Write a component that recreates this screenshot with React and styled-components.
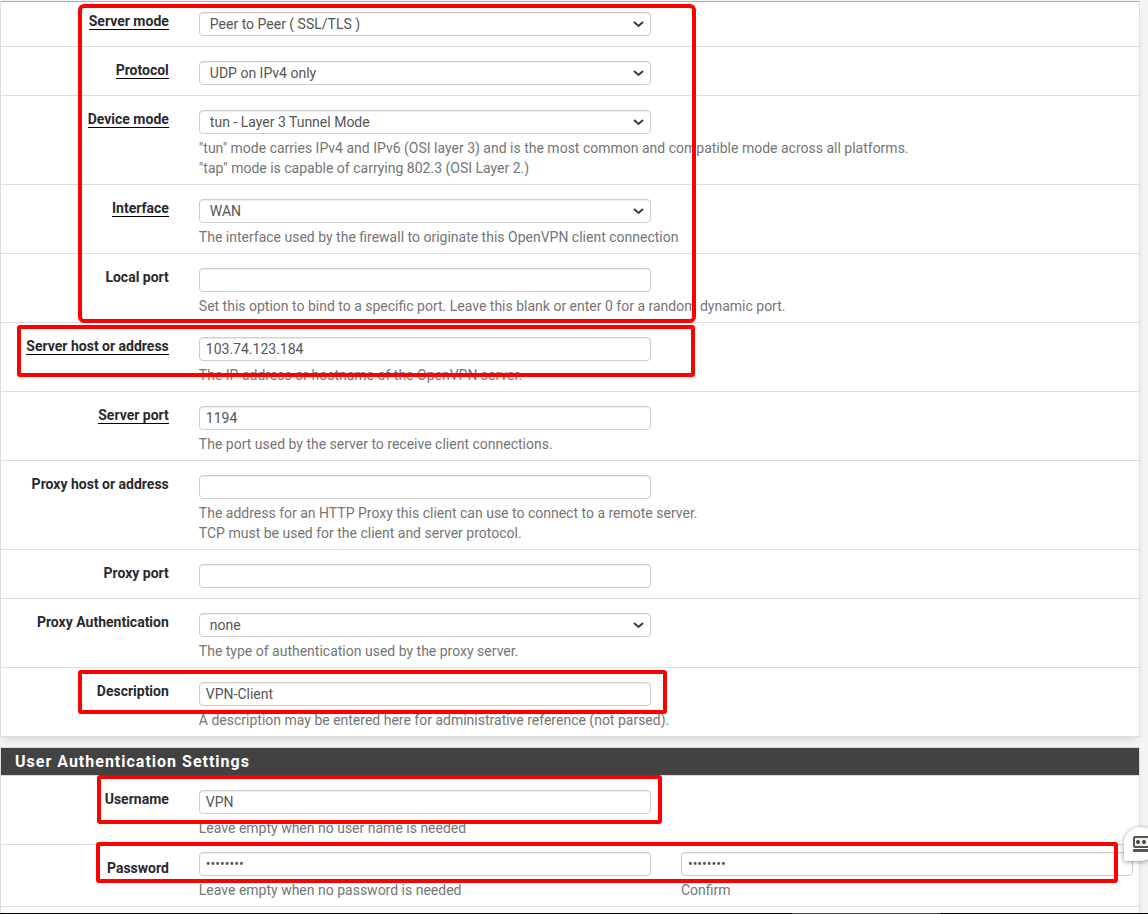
import React from 'react';
import styled, { createGlobalStyle } from 'styled-components';

const GlobalStyle = createGlobalStyle`
  * { box-sizing: border-box; }
  body {
    margin: 0;
    background: #f4f4f4;
    color: #212121;
    font-family: Roboto, "Liberation Sans", sans-serif;
    font-size: 14px;
    line-height: 20px;
    overflow-x: hidden;
  }
`;

const Page = styled.main`
  position: relative;
  overflow: hidden;
  border-top: 1px solid #f4f4f4;
`;

const Panel = styled.section`
  margin: 0 8px ${p => (p.$last ? '0' : '10px')} 0;
  background: #fff;
  border: 1px solid #ddd;
  border-top-color: ${p => (p.$cut ? '#b0b0b0' : '#ddd')};
  border-bottom-width: ${p => (p.$last ? '0' : '1px')};
  box-shadow: 0 6px 8px -4px rgba(0, 0, 0, 0.15);
`;

const PanelTitle = styled.h2`
  margin: 0;
  padding: 4px 14px 3px;
  background: #424242;
  border-bottom: 1px solid #ddd;
  color: #fff;
  font-size: 16px;
  font-weight: 700;
  letter-spacing: 1px;
  line-height: 20px;
`;

const Row = styled.div`
  border-bottom: ${p => (p.$last ? '0' : '1px solid #ddd')};
`;

const Grid = styled.div`
  display: grid;
  grid-template-columns: 2fr 5fr 5fr;
  margin: ${p => (p.$first ? '-4px' : '0')} -9px 0 -10px;
  padding-bottom: 6px;
`;

const LabelCell = styled.div`
  grid-row: 1 / span 2;
  padding: 14px 15px 0;
  text-align: right;
  white-space: nowrap;
  display: flex;
  justify-content: flex-end;
`;

const Label = styled.label`
  font-weight: 700;
  line-height: 18px;
  height: 18px;
  color: #2a2a2e;
  border-bottom: ${p => (p.$required ? '1px solid #000' : '0')};
`;

const Cell = styled.div`
  grid-column: ${p => p.$col};
  padding: ${p => (p.$tight ? '7px' : '14px')} 15px 4px;
`;

const control = `
  display: block;
  width: 100%;
  height: 24px;
  padding: 0 6px;
  border: 1px solid #ccc;
  border-radius: 4px;
  background: #fff;
  color: #555;
  font-family: inherit;
  font-size: 14px;
  box-shadow: inset 0 1px 1px rgba(0, 0, 0, 0.075);
`;

const Input = styled.input`${control}`;

const Select = styled.select`
  ${control}
  appearance: none;
  padding: 0 24px 0 10px;
`;

const SelectBox = styled.div`
  position: relative;

  svg {
    position: absolute;
    top: 8px;
    right: 7px;
    pointer-events: none;
  }
`;

const Help = styled.div`
  grid-row: 2;
  grid-column: ${p => p.$span};
  padding: 0 15px;
  color: #757575;
`;

const Mark = styled.div`
  position: absolute;
  left: ${p => p.$x}px;
  top: ${p => p.$y}px;
  width: ${p => p.$w}px;
  height: ${p => p.$h}px;
  border: 4px solid #f00;
  border-radius: ${p => p.$radius || 3}px;
  pointer-events: none;
`;

const Stub = styled.div`
  height: 6px;
`;

const Taskbar = styled.div`
  position: relative;
  height: 1px;
  background: linear-gradient(to right, #000 69%, #444 69%, #444 82%, #000 82%);
`;

const HelperButton = styled.button`
  position: absolute;
  right: -8px;
  top: 826px;
  display: flex;
  align-items: flex-start;
  width: 32px;
  height: 34px;
  padding: 9px 0 0 9px;
  border: 0;
  border-radius: 17px 17px 17px 2px;
  background: #fff;
  box-shadow: 0 1px 5px rgba(0, 0, 0, 0.4);

  svg {
    flex: none;
  }
`;

const clientRows = [
  { id: 'mode', label: 'Server mode', required: true, select: 'Peer to Peer ( SSL/TLS )' },
  { id: 'protocol', label: 'Protocol', required: true, select: 'UDP on IPv4 only' },
  {
    id: 'dev_mode',
    label: 'Device mode',
    required: true,
    select: 'tun - Layer 3 Tunnel Mode',
    help: [
      '"tun" mode carries IPv4 and IPv6 (OSI layer 3) and is the most common and compatible mode across all platforms.',
      '"tap" mode is capable of carrying 802.3 (OSI Layer 2.)',
    ],
  },
  {
    id: 'interface',
    label: 'Interface',
    required: true,
    select: 'WAN',
    help: ['The interface used by the firewall to originate this OpenVPN client connection'],
  },
  {
    id: 'local_port',
    label: 'Local port',
    value: '',
    help: ['Set this option to bind to a specific port. Leave this blank or enter 0 for a random dynamic port.'],
  },
  {
    id: 'server_addr',
    label: 'Server host or address',
    required: true,
    value: '103.74.123.184',
    help: ['The IP address or hostname of the OpenVPN server.'],
  },
  {
    id: 'server_port',
    label: 'Server port',
    required: true,
    value: '1194',
    help: ['The port used by the server to receive client connections.'],
  },
  {
    id: 'proxy_addr',
    label: 'Proxy host or address',
    value: '',
    help: [
      'The address for an HTTP Proxy this client can use to connect to a remote server.',
      'TCP must be used for the client and server protocol.',
    ],
  },
  { id: 'proxy_port', label: 'Proxy port', value: '' },
  {
    id: 'proxy_authtype',
    label: 'Proxy Authentication',
    select: 'none',
    help: ['The type of authentication used by the proxy server.'],
  },
  {
    id: 'description',
    label: 'Description',
    value: 'VPN-Client',
    help: ['A description may be entered here for administrative reference (not parsed).'],
  },
];

const username = {
  id: 'auth_user',
  label: 'Username',
  value: 'VPN',
  help: ['Leave empty when no user name is needed'],
};

const Chevron = () => (
  <svg width="11" height="8" viewBox="0 0 11 8" fill="none">
    <path d="M1 2L5.5 6L10 2" stroke="#3a3a3a" strokeWidth="2" />
  </svg>
);

const FormRow = ({ id, label, required, select, value, help, first, last }) => (
  <Row $last={last}>
    <Grid $first={first}>
      <LabelCell>
        <Label htmlFor={id} $required={required}>{label}</Label>
      </LabelCell>
      <Cell $col={2}>
        {select ? (
          <SelectBox>
            <Select id={id}><option>{select}</option></Select>
            <Chevron />
          </SelectBox>
        ) : (
          <Input id={id} type="text" defaultValue={value} />
        )}
      </Cell>
      {help && (
        <Help $span="2 / 4">
          {help.map(line => <div key={line}>{line}</div>)}
        </Help>
      )}
    </Grid>
  </Row>
);

const PasswordRow = () => (
  <Row>
    <Grid>
      <LabelCell>
        <Label htmlFor="auth_pass">Password</Label>
      </LabelCell>
      <Cell $col={2} $tight>
        <Input id="auth_pass" type="password" defaultValue="password" />
      </Cell>
      <Cell $col={3} $tight>
        <Input id="auth_pass_confirm" type="password" defaultValue="password" />
      </Cell>
      <Help $span="2">Leave empty when no password is needed</Help>
      <Help $span="3" as="label" htmlFor="auth_pass_confirm">Confirm</Help>
    </Grid>
  </Row>
);

const RobotIcon = () => (
  <svg width="20" height="17" viewBox="0 0 20 17">
    <rect x="1" y="1" width="18" height="10" rx="1" fill="#f4f2e8" stroke="#555" strokeWidth="2" />
    <circle cx="5" cy="6" r="2" fill="#444" />
    <circle cx="11" cy="6" r="2" fill="#444" />
    <rect x="0" y="13" width="20" height="3" rx="1" fill="#555" />
  </svg>
);

const App = () => (
  <Page>
    <GlobalStyle />
    <Panel $cut>
      {clientRows.map((row, i) => (
        <FormRow key={row.id} {...row} first={i === 0} last={i === clientRows.length - 1} />
      ))}
    </Panel>
    <Panel $last>
      <PanelTitle>User Authentication Settings</PanelTitle>
      <FormRow {...username} />
      <PasswordRow />
      <Stub />
    </Panel>
    <Taskbar />
    <HelperButton type="button" aria-label="Fill form"><RobotIcon /></HelperButton>
    <Mark $x={78} $y={3} $w={618} $h={319} $radius={6} />
    <Mark $x={17} $y={324} $w={678} $h={52} />
    <Mark $x={78} $y={669} $w={589} $h={44} />
    <Mark $x={97} $y={774} $w={565} $h={49} />
    <Mark $x={96} $y={841} $w={1022} $h={41} />
  </Page>
);

export default App;
